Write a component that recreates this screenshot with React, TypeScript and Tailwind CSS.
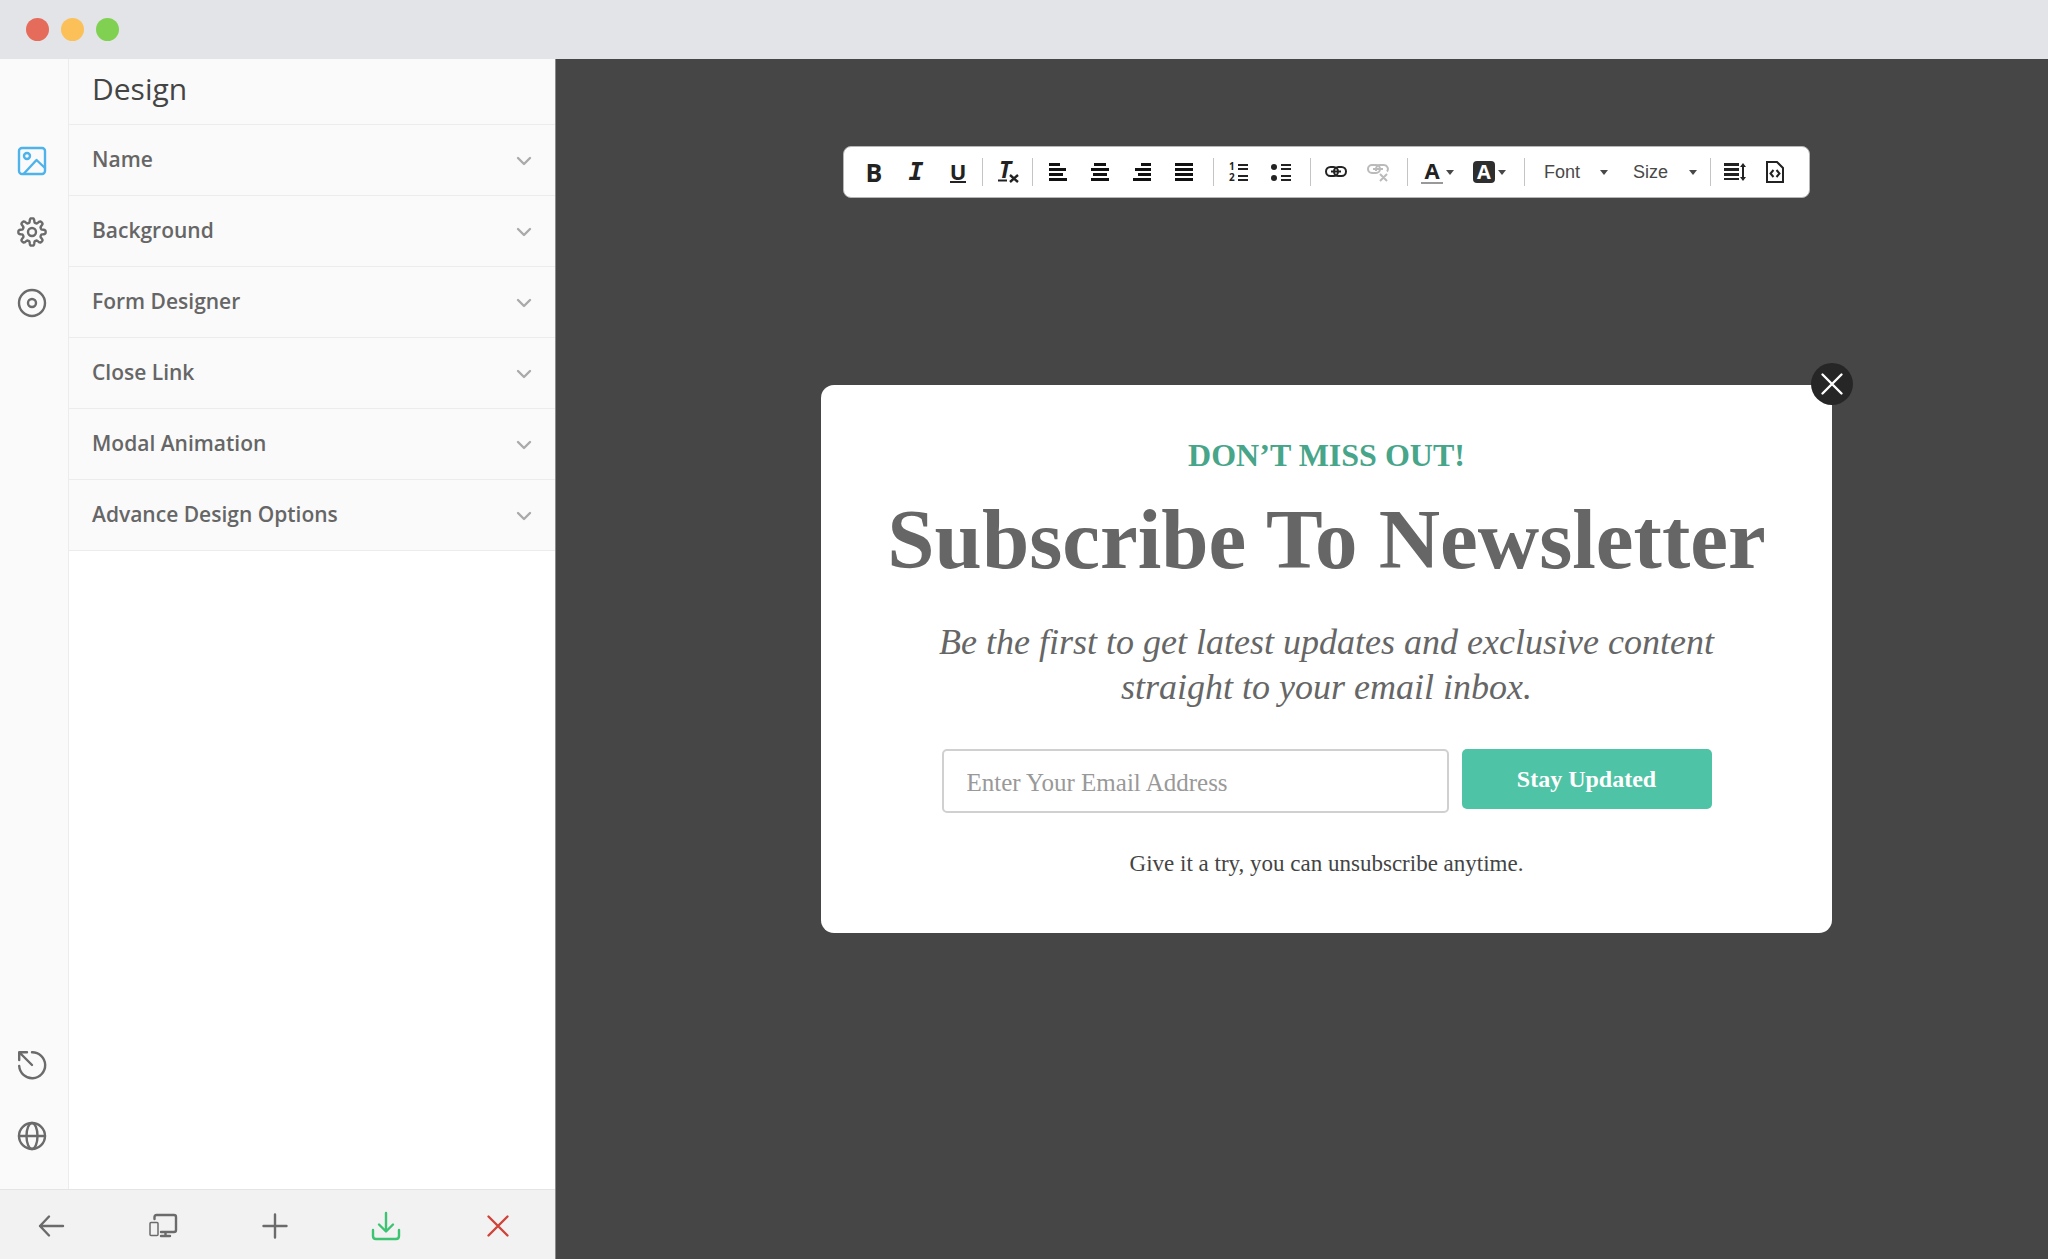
import { ReactNode } from 'react';
import clsx from 'clsx';

const panelSections = [
  'Name',
  'Background',
  'Form Designer',
  'Close Link',
  'Modal Animation',
  'Advance Design Options',
];

// Rounded eight-tooth gear outline around (14, 14)
function gearPath() {
  const points: string[] = [];
  for (let i = 0; i <= 160; i++) {
    const angle = (i / 160) * Math.PI * 2;
    const wave = Math.cos(angle * 8);
    const r = 11.6 + 2.1 * Math.tanh(wave * 2.2);
    points.push(`${(14 + r * Math.sin(angle)).toFixed(2)} ${(14 - r * Math.cos(angle)).toFixed(2)}`);
  }
  return `M${points.join('L')}Z`;
}

interface IconProps {
  children: ReactNode;
  className?: string;
  size?: number;
  strokeWidth?: number;
}

function Icon({ children, className, size = 28, strokeWidth = 2.4 }: IconProps) {
  return (
    <svg
      width={size}
      height={size}
      viewBox={`0 0 ${size} ${size}`}
      fill="none"
      stroke="currentColor"
      strokeWidth={strokeWidth}
      strokeLinecap="round"
      strokeLinejoin="round"
      className={clsx('shrink-0 overflow-visible', className)}
      aria-hidden="true"
    >
      {children}
    </svg>
  );
}

function TitleBar() {
  return (
    <header className="flex h-[59px] shrink-0 items-center gap-3 bg-[#e3e4e8] px-[26px]">
      <span className="size-[23px] rounded-full bg-[#e56b5a]" />
      <span className="size-[23px] rounded-full bg-[#fbc057]" />
      <span className="size-[23px] rounded-full bg-[#80d152]" />
    </header>
  );
}

function RailButton({ label, active, children }: { label: string; active?: boolean; children: ReactNode }) {
  return (
    <button
      type="button"
      aria-label={label}
      className={clsx('flex h-[71px] w-16 items-center justify-center', active ? 'text-[#4db3ea]' : 'text-[#6b6b6b]')}
    >
      <Icon>{children}</Icon>
    </button>
  );
}

function Rail() {
  return (
    <nav className="flex w-[69px] shrink-0 flex-col border-r border-[#ececec] bg-[#fafafa] pt-[66px] pb-[18px]">
      <RailButton label="Design" active>
        <rect x="1" y="1" width="26" height="26" rx="3" />
        <circle cx="9" cy="9" r="3" />
        <path d="M6 26.500 18.500 13 27 21" />
      </RailButton>
      <RailButton label="Settings">
        <path d={gearPath()} />
        <circle cx="14" cy="14" r="4" />
      </RailButton>
      <RailButton label="Target">
        <circle cx="14" cy="14" r="13" />
        <circle cx="14" cy="14" r="4" />
      </RailButton>
      <div className="grow" />
      <RailButton label="Reset">
        <path d="M14 1.200A13 13 0 1 1 1.200 15" />
        <path d="M14 14 1.500 1.500M1.200 9V1.200H9" />
      </RailButton>
      <RailButton label="Language">
        <circle cx="14" cy="14" r="13" />
        <ellipse cx="14" cy="14" rx="5.500" ry="13" />
        <path d="M1 14h26" />
      </RailButton>
    </nav>
  );
}

function DesignPanel() {
  return (
    <section className="flex min-w-0 grow flex-col bg-white">
      <h2 className="h-[66px] border-b border-[#ececec] bg-[#fafafa] px-[23px] text-[30px] leading-[60px] text-[#444]">
        Design
      </h2>
      {panelSections.map((name) => (
        <button
          key={name}
          type="button"
          className="flex h-[71px] items-center justify-between border-b border-[#ececec] bg-[#fafafa] pr-6 pl-[23px] text-[21px] font-semibold text-[#666]"
        >
          {name}
          <Icon size={14} className="text-[#aaa]">
            <path d="M1 5l6 6 6-6" />
          </Icon>
        </button>
      ))}
    </section>
  );
}

function FooterButton({ label, className, children }: { label: string; className?: string; children: ReactNode }) {
  return (
    <button type="button" aria-label={label} className={className}>
      <Icon>{children}</Icon>
    </button>
  );
}

function FooterBar() {
  return (
    <div className="flex h-[70px] shrink-0 items-center justify-between border-t border-[#e4e4e4] bg-[#f2f2f2] pt-[2px] pr-[43px] pl-[37px] text-[#6b6b6b]">
      <FooterButton label="Back">
        <path d="M26 14H3M12 4.500 3 14l9 9.500" />
      </FooterButton>
      <FooterButton label="Responsive preview">
        <path d="M5.500 7V5q0-2 2-2h17.500q2 0 2 2v13q0 2-2 2H12" />
        <path d="M12 24h9M16.500 21v3" />
        <rect x="1" y="10.500" width="8" height="13" rx="1" strokeWidth="1.500" />
      </FooterButton>
      <FooterButton label="Add">
        <path d="M14 2.500v23M2.500 14h23" />
      </FooterButton>
      <FooterButton label="Save" className="text-[#3cc472]">
        <path d="M14 1v18M7 12.500l7 7 7-7" />
        <path d="M1 18v6q0 3 3 3h20q3 0 3-3v-6" />
      </FooterButton>
      <FooterButton label="Close editor" className="text-[#cf4438]">
        <path d="M4.500 4.500l19 19M23.500 4.500l-19 19" />
      </FooterButton>
    </div>
  );
}

function ToolButton({ label, className, children }: { label: string; className?: string; children: ReactNode }) {
  return (
    <button
      type="button"
      aria-label={label}
      className={clsx('flex h-9 shrink-0 items-center justify-center text-[#222]', className ?? 'w-[42px]')}
    >
      {children}
    </button>
  );
}

function Separator({ tight }: { tight?: boolean }) {
  return <span className={clsx('mr-1 h-7 w-px shrink-0 bg-[#c4c4c4]', tight ? 'ml-[3px]' : 'ml-2')} />;
}

function Caret({ className }: { className?: string }) {
  return (
    <svg width="8" height="5" viewBox="0 0 8 5" className={className} aria-hidden="true">
      <path d="M0 0h8L4 5z" fill="#484848" />
    </svg>
  );
}

function Lines({ rows }: { rows: number[][] }) {
  return (
    <svg width="18" height="18" viewBox="0 0 18 18" fill="#111" aria-hidden="true">
      {rows.map(([x, width], i) => (
        <rect key={i} x={x} y={i * 5} width={width} height="3" />
      ))}
    </svg>
  );
}

function ToolSelect({ label }: { label: string }) {
  return (
    <label className="relative flex w-[89px] shrink-0 items-center">
      <select
        aria-label={label}
        className="h-9 w-full appearance-none bg-transparent pl-[15px] font-['Liberation_Sans',sans-serif] text-[18px] text-[#484848]"
      >
        <option>{label}</option>
      </select>
      <Caret className="pointer-events-none absolute right-[10px]" />
    </label>
  );
}

function Toolbar() {
  return (
    <div className="flex h-[52px] items-center rounded-lg border border-[#b6b6b6] bg-white pr-[14px] pl-[9px]">
      <ToolButton label="Bold">
        <span className="text-[25px] leading-7 font-bold">B</span>
      </ToolButton>
      <ToolButton label="Italic">
        <span className="font-['DejaVu_Sans_Mono',monospace] text-[25px] leading-7 font-bold italic">I</span>
      </ToolButton>
      <ToolButton label="Underline">
        <span className="border-b-2 border-current text-[22px] leading-5 font-bold">U</span>
      </ToolButton>
      <Separator tight />
      <ToolButton label="Remove format">
        <svg width="28" height="44" viewBox="-3 -11 28 44" aria-hidden="true">
          <text x="2" y="17" fontSize="23" fontWeight="700" fontStyle="italic" fill="#222">T</text>
          <path d="M1 19.500h9" stroke="#222" strokeWidth="2" />
          <path d="M13 14l8 7M21 14l-8 7" stroke="#222" strokeWidth="2.400" />
        </svg>
      </ToolButton>
      <Separator tight />
      <ToolButton label="Align left">
        <Lines rows={[[0, 11], [0, 17], [0, 14], [0, 18]]} />
      </ToolButton>
      <ToolButton label="Align center">
        <Lines rows={[[3, 12], [0, 18], [2, 14], [0, 18]]} />
      </ToolButton>
      <ToolButton label="Align right">
        <Lines rows={[[8, 10], [2, 16], [5, 13], [0, 18]]} />
      </ToolButton>
      <ToolButton label="Justify">
        <Lines rows={[[0, 18], [0, 18], [0, 18], [0, 18]]} />
      </ToolButton>
      <Separator />
      <ToolButton label="Numbered list">
        <svg width="24" height="36" viewBox="-2 -8 24 36" fill="#222" aria-hidden="true">
          <text x="0" y="8" fontSize="10" fontWeight="700">1</text>
          <text x="0" y="19" fontSize="10" fontWeight="700">2</text>
          <path d="M9 2h10v2H9zM9 6h10v2H9zM9 13h10v2H9zM9 17h10v2H9z" />
        </svg>
      </ToolButton>
      <ToolButton label="Bulleted list">
        <svg width="20" height="20" viewBox="0 0 20 20" fill="#222" aria-hidden="true">
          <circle cx="3" cy="5" r="3" />
          <circle cx="3" cy="16" r="3" />
          <path d="M10 2h10v2H10zM10 6h10v2H10zM10 13h10v2H10zM10 17h10v2H10z" />
        </svg>
      </ToolButton>
      <Separator />
      <ToolButton label="Link">
        <svg width="22" height="12" viewBox="0 0 22 12" fill="none" stroke="#222" strokeWidth="2" aria-hidden="true">
          <rect x="1" y="1" width="12" height="9" rx="4.500" />
          <rect x="9" y="1" width="12" height="9" rx="4.500" />
          <path d="M6 5.500h10" />
        </svg>
      </ToolButton>
      <ToolButton label="Unlink">
        <svg width="22" height="20" viewBox="0 0 22 20" fill="none" stroke="#bbb" strokeWidth="2" aria-hidden="true">
          <rect x="1" y="3" width="12" height="8" rx="4" />
          <path d="M9 9V7a4 4 0 0 1 4-4h4a4 4 0 0 1 3 6.500M6 7h10M13 12l7 7M20 12l-7 7" />
        </svg>
      </ToolButton>
      <Separator />
      <ToolButton label="Text color" className="gap-[3px] pr-[10px] pl-[9px]">
        <span className="flex h-6 w-[22px] justify-center border-b-2 border-[#999] text-[22px] leading-5 font-bold">A</span>
        <Caret />
      </ToolButton>
      <ToolButton label="Background color" className="gap-[3px] pr-[10px] pl-[9px]">
        <span className="flex size-[22px] items-center justify-center rounded-sm bg-[#2e2e2e] text-[20px] leading-5 font-bold text-white">
          A
        </span>
        <Caret />
      </ToolButton>
      <Separator />
      <ToolSelect label="Font" />
      <ToolSelect label="Size" />
      <Separator tight />
      <ToolButton label="Line height" className="w-10">
        <svg width="22" height="18" viewBox="0 0 22 18" fill="#222" aria-hidden="true">
          <path d="M0 0h15v3H0zM0 5h15v3H0zM0 10h15v3H0zM0 15h15v2H0z" />
          <path d="M19 0l3 4h-2v10h2l-3 4-3-4h2V4h-2z" />
        </svg>
      </ToolButton>
      <ToolButton label="Source" className="w-10">
        <svg width="18" height="22" viewBox="0 0 18 22" fill="none" stroke="#222" strokeWidth="2" aria-hidden="true">
          <path d="M1 1h10l6 6v14H1z" />
          <path d="M7.500 9 4.500 12.500l3 3.500M10.500 9l3 3.500-3 3.500" />
        </svg>
      </ToolButton>
    </div>
  );
}

function NewsletterModal() {
  return (
    <div className="relative flex w-full max-w-[1011px] flex-col items-center rounded-[13px] bg-white pt-[50px] pb-[54px] text-center font-['Liberation_Serif',serif]">
      <button
        type="button"
        aria-label="Close"
        className="absolute -top-[22px] -right-[21px] flex size-[42px] items-center justify-center rounded-full bg-[#262626] text-white"
      >
        <Icon size={22}>
          <path d="M1.500 1.500l19 19M20.500 1.500l-19 19" />
        </Icon>
      </button>
      <p className="text-[32px] leading-10 font-bold text-[#47a58a]">DON’T MISS OUT!</p>
      <h1 className="mt-4 text-[85px] leading-24 font-bold text-[#666]">Subscribe To Newsletter</h1>
      <p className="mt-[33px] max-w-[840px] text-[36px] leading-[45px] text-[#666] italic">
        Be the first to get latest updates and exclusive content straight to your email inbox.
      </p>
      <form className="mt-[39px] flex items-start gap-[13px]" onSubmit={(e) => e.preventDefault()}>
        <input
          type="email"
          aria-label="Email address"
          placeholder="Enter Your Email Address"
          className="h-16 w-[507px] rounded-[5px] border-2 border-[#d0d0d0] px-[23px] pt-1 text-[25px] placeholder:text-[#999]"
        />
        <button type="submit" className="h-[60px] w-[250px] rounded-[5px] bg-[#4fc3a5] text-[24px] font-bold text-white">
          Stay Updated
        </button>
      </form>
      <p className="mt-9 text-[23px] leading-[30px] text-[#444]">Give it a try, you can unsubscribe anytime.</p>
    </div>
  );
}

export default function App() {
  return (
    <div className="flex min-h-screen flex-col font-['Open_Sans',sans-serif]">
      <TitleBar />
      <div className="flex grow">
        <aside className="flex w-[556px] shrink-0 flex-col border-r border-[#8a8a8a] bg-white">
          <div className="flex grow">
            <Rail />
            <DesignPanel />
          </div>
          <FooterBar />
        </aside>
        <main className="flex min-w-0 grow flex-col items-center bg-[#464646] pt-[87px] pl-[49px]">
          <Toolbar />
          <div className="mt-[187px] flex w-full justify-center">
            <NewsletterModal />
          </div>
        </main>
      </div>
    </div>
  );
}
